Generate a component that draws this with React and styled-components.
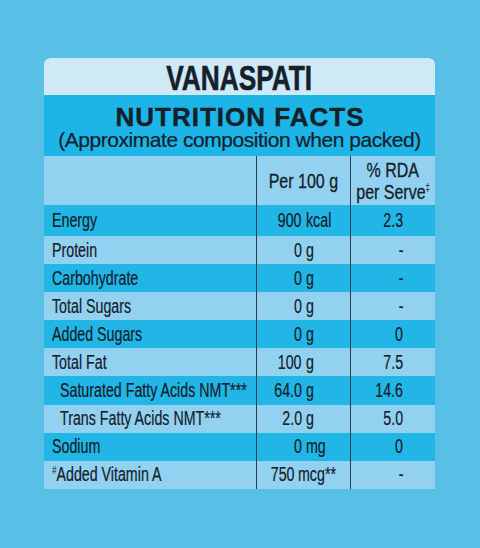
import React from 'react';
import styled, { createGlobalStyle } from 'styled-components';

const GlobalStyle = createGlobalStyle`
  html, body {
    margin: 0;
    padding: 0;
    background: #58bfe7;
  }
  body {
    font-family: "Liberation Sans", Arial, sans-serif;
    color: #15202a;
  }
`;

const Page = styled.div`
  width: 480px;
  height: 548px;
  padding: 58px 0 0 44px;
  box-sizing: border-box;
`;

const Panel = styled.div`
  width: 391px;
  border-radius: 6px 6px 0 0;
  overflow: hidden;
`;

// condensed look: the reference uses a narrow grotesque we don't have
const Narrow = styled.span`
  display: inline-block;
  white-space: nowrap;
  transform: scaleX(${p => p.s || 0.73});
  transform-origin: ${p => p.o || 'left'} center;
  -webkit-text-stroke: ${p => p.w ?? 0.2}px currentColor;
`;

const TitleBox = styled.div`
  height: 37px;
  background: #cfe9f7;
  border-radius: 6px 6px 0 0;
  display: flex;
  align-items: center;
  justify-content: center;
  font-size: 35px;
  font-weight: 700;
  line-height: 37px;
  padding-top: 2px;
  box-sizing: border-box;
`;

const Band = styled.div`
  height: 61px;
  background: #1db5e7;
  display: flex;
  flex-direction: column;
  align-items: center;
`;

const Heading = styled.div`
  font-size: 26px;
  font-weight: 700;
  letter-spacing: 1px;
  line-height: 22px;
  margin-top: 11px;
  margin-right: -1px;
  -webkit-text-stroke: 0.4px currentColor;
`;

const Sub = styled.div`
  font-size: 21px;
  line-height: 22px;
  margin-top: 1px;
  letter-spacing: -0.45px;
  -webkit-text-stroke: 0.2px currentColor;
`;

const Table = styled.div`
  display: grid;
  grid-template-columns: 212px 94px 85px;
`;

const Cell = styled.div`
  height: ${p => p.h}px;
  background: ${p => (p.dark ? '#21b6e6' : '#92d1ef')};
  display: flex;
  align-items: center;
  font-size: 19.5px;
  box-sizing: border-box;
  border-left: ${p => (p.line ? '1px solid #243f4f' : 'none')};
`;

const Label = styled(Cell)`
  padding-left: ${p => (p.indent ? 16 : 8)}px;
`;

const Amount = styled(Cell)``;

const Num = styled.span`
  width: 45px;
  display: flex;
  justify-content: flex-end;
`;

const Unit = styled.span`
  margin-left: 3.5px;
  display: flex;
`;

const Rda = styled(Cell)`
  justify-content: flex-end;
  padding-right: 32px;
`;

const HeadCell = styled(Cell)`
  justify-content: center;
  align-items: center;
  flex-direction: column;
  font-size: 20px;
  line-height: 18px;
`;

const Mark = styled.sup`
  font-size: ${p => p.size || 11}px;
  -webkit-text-stroke: 0;
`;

const rows = [
  { name: 'Energy', num: '900', unit: 'kcal', rda: '2.3', dark: true },
  { name: 'Protein', num: '0', unit: 'g', rda: '-' },
  { name: 'Carbohydrate', num: '0', unit: 'g', rda: '-', dark: true },
  { name: 'Total Sugars', num: '0', unit: 'g', rda: '-' },
  { name: 'Added Sugars', num: '0', unit: 'g', rda: '0', dark: true },
  { name: 'Total Fat', num: '100', unit: 'g', rda: '7.5' },
  { name: 'Saturated Fatty Acids NMT***', num: '64.0', unit: 'g', rda: '14.6', dark: true, indent: true },
  { name: 'Trans Fatty Acids NMT***', num: '2.0', unit: 'g', rda: '5.0', indent: true },
  { name: 'Sodium', num: '0', unit: 'mg', rda: '0', dark: true },
  { name: 'Added Vitamin A', num: '750', unit: 'mcg**', rda: '-', mark: '#' },
];

export default function App() {
  return (
    <>
      <GlobalStyle />
      <Page>
        <Panel>
          <TitleBox>
            <Narrow s={0.75} o="center" w={0.6}>VANASPATI</Narrow>
          </TitleBox>
          <Band>
            <Heading>NUTRITION FACTS</Heading>
            <Sub>(Approximate composition when packed)</Sub>
          </Band>
          <Table>
            <HeadCell h={49} />
            <HeadCell h={49} line>
              <Narrow s={0.8} o="center" w={0.3}>Per 100 g</Narrow>
            </HeadCell>
            <HeadCell h={49} line>
              <Narrow s={0.8} o="center" w={0.3}>% RDA</Narrow>
              <Narrow s={0.8} o="center" w={0.3}>
                per Serve<Mark size={10}>‡</Mark>
              </Narrow>
            </HeadCell>
            {rows.map((r, i) => {
              const h = i === 0 ? 31 : 28.1;
              return (
                <React.Fragment key={r.name}>
                  <Label h={h} dark={r.dark} indent={r.indent}>
                    <Narrow>
                      {r.mark && <Mark>{r.mark}</Mark>}
                      {r.name}
                    </Narrow>
                  </Label>
                  <Amount h={h} dark={r.dark} line>
                    <Num>
                      <Narrow o="right">{r.num}</Narrow>
                    </Num>
                    <Unit>
                      <Narrow>{r.unit}</Narrow>
                    </Unit>
                  </Amount>
                  <Rda h={h} dark={r.dark} line>
                    <Narrow o="right">{r.rda}</Narrow>
                  </Rda>
                </React.Fragment>
              );
            })}
          </Table>
        </Panel>
      </Page>
    </>
  );
}
